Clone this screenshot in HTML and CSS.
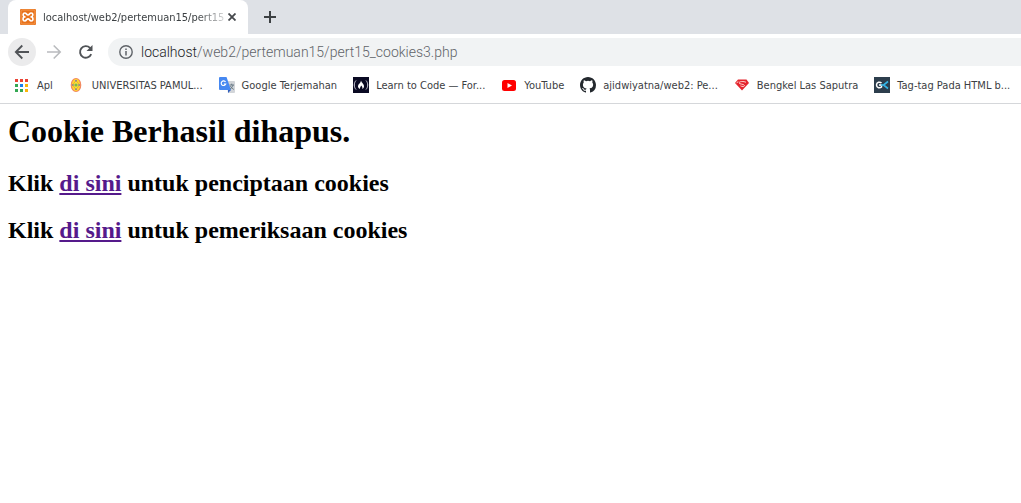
FILE: index.html
```html
<!DOCTYPE html>
<html lang="id">
<head>
<meta charset="utf-8">
<title>Cookies</title>
<link rel="stylesheet" href="styles.css">
</head>
<body>
<header class="browser">
  <div class="tabs">
    <div class="tab">
      <svg class="icon tab-icon" viewBox="0 0 16 16" aria-hidden="true"><rect width="16" height="16" rx="1" fill="#e8721c"/><rect x="1" y="1" width="14" height="14" rx="1" fill="none" stroke="#f39a50"/><path d="M5.500 7.800H4.200C2.700 6.500 2.800 4 4.800 4c1.700 0 1.700 2 3.200 2s1.500-2 3.200-2c2 0 2.100 2.500.600 3.800h-1.300M4.200 7.800C2.500 9 2.600 12 4.800 12c1.700 0 1.700-2.200 3.200-2.200s1.500 2.200 3.200 2.200c2.200 0 2.300-3 .600-4.200" fill="none" stroke="#fff" stroke-width="1.700"/></svg>
      <span class="tab-title">localhost/web2/pertemuan15/pert15</span>
      <button class="tab-close" type="button" aria-label="Tutup tab"><svg viewBox="0 0 8 8"><path d="M.5.5l7 7M7.5.5l-7 7" stroke="#45484c" stroke-width="1.8"/></svg></button>
    </div>
    <button class="new-tab" type="button" aria-label="Tab baru"><svg viewBox="0 0 12 12"><path d="M6 0v12M0 6h12" stroke="#3c4043" stroke-width="2"/></svg></button>
  </div>
  <div class="toolbar">
    <button class="nav nav-active" type="button" aria-label="Kembali"><svg viewBox="0 0 16 16"><path d="M15 8H2M8.3 1.5L1.8 8l6.5 6.5" fill="none" stroke="#505357" stroke-width="1.800"/></svg></button>
    <button class="nav" type="button" aria-label="Maju"><svg viewBox="0 0 16 16"><path d="M1 8h13M7.7 1.5L14.2 8l-6.5 6.5" fill="none" stroke="#b9bbbe" stroke-width="1.6"/></svg></button>
    <button class="nav" type="button" aria-label="Muat ulang"><svg viewBox="0 0 16 16"><path d="M13.2 10.2A5.8 5.8 0 1 1 12 3.9l1 1" fill="none" stroke="#505357" stroke-width="1.900"/><path d="M14.500 1v6h-6z" fill="#505357"/></svg></button>
    <div class="address">
      <svg class="info" viewBox="0 0 14 14" aria-hidden="true"><circle cx="7" cy="7" r="6.2" fill="none" stroke="#5f6368" stroke-width="1.4"/><path d="M7 6v4.5M7 3.4v1.5" stroke="#5f6368" stroke-width="1.5"/></svg>
      <span class="url"><span class="host">localhost</span>/web2/pertemuan15/pert15_cookies3.php</span>
    </div>
  </div>
  <nav class="bookmarks">
    <a class="bookmark" href="#"><svg class="icon" viewBox="0 0 16 16"><path d="M1 2h3v3H1zM6 2h3v3H6zM11 2h3v3h-3z" fill="#ea4335"/><path d="M1 7h3v3H1zM1 12h3v3H1zM6 12h3v3H6z" fill="#34a853"/><path d="M6 7h3v3H6z" fill="#1a80f0"/><path d="M11 7h3v3h-3zM11 12h3v3h-3z" fill="#fbb40a"/></svg>Apl</a>
    <a class="bookmark" href="#"><svg class="icon" viewBox="0 0 16 16"><ellipse cx="7" cy="8" rx="4.7" ry="6.5" fill="#ffde28" stroke="#f28a62" stroke-width="1.2"/><path d="M7 3.5L10.5 8 7 12.5 3.5 8z" fill="#f6e040" stroke="#e8a030" stroke-width=".8"/><circle cx="7" cy="8" r="1.6" fill="#7cb84c"/><path d="M6.300 3h1.400v1.400H6.300zM6.300 11.600h1.400V13H6.300zM3.200 7.300h1.400v1.400H3.200zM9.400 7.300h1.400v1.400H9.400z" fill="#6b70b5"/></svg>UNIVERSITAS PAMUL...</a>
    <a class="bookmark" href="#"><svg class="icon" viewBox="0 0 16 16"><path d="M7 4h8a1 1 0 0 1 1 1v10a1 1 0 0 1-1 1H9z" fill="#d2d5d9"/><path d="M1 0h6.5L12 13H1a1 1 0 0 1-1-1V1a1 1 0 0 1 1-1z" fill="#4688f1"/><path d="M9 13h3l-3 3z" fill="#315fbd"/><path d="M6.500 5A2.3 2.3 0 1 0 6.700 7H4.800" fill="none" stroke="#fff" stroke-width="1.2"/><path d="M10.5 8H15M12.7 6.7V8M14 8c-.3 2-1.6 3.4-3 4M11.5 9c.6 1.5 2 2.7 3.3 3.4" fill="none" stroke="#697b87"/></svg>Google Terjemahan</a>
    <a class="bookmark" href="#"><svg class="icon" viewBox="0 0 16 16"><path d="M0 0h16v16H0z" fill="#0a0a23"/><path d="M3 3.5C.7 6 .7 10 3 12.500M13 3.500c2.300 2.500 2.300 6.500 0 9" fill="none" stroke="#d0d0dc"/><path d="M8 3.500c.5 2.500 3.300 3.500 3 6-.1 1-.7 1.900-1.700 2.500.4-1.500 0-2.500-1.200-3.500C7.600 10 6.800 10.500 7 12c-1.800-.8-2.500-2.400-1.700-4C6 6.500 7.800 6 8 3.500z" fill="#fff"/></svg>Learn to Code — For...</a>
    <a class="bookmark" href="#"><svg class="icon" viewBox="0 0 16 16"><rect x="1" y="3" width="14" height="11" rx="2.500" fill="#f00"/><path d="M6.500 6l4.500 2.500L6.500 11z" fill="#fff"/></svg>YouTube</a>
    <a class="bookmark" href="#"><svg class="icon" viewBox="0 0 16 16"><path fill="#24292e" d="M8 0C3.580 0 0 3.580 0 8c0 3.540 2.290 6.530 5.470 7.590.4.070.55-.17.55-.38 0-.19-.01-.82-.01-1.490-2.010.37-2.530-.49-2.690-.94-.09-.23-.48-.94-.82-1.130-.28-.15-.68-.52-.01-.53.63-.01 1.080.58 1.230.82.72 1.210 1.870.87 2.330.66.07-.52.28-.87.51-1.070-1.780-.2-3.640-.89-3.640-3.950 0-.87.31-1.590.82-2.150-.08-.2-.36-1.020.08-2.120 0 0 .67-.21 2.200.82a7.600 7.600 0 0 1 4 0c1.530-1.040 2.200-.82 2.200-.82.44 1.100.16 1.920.08 2.120.51.56.82 1.270.82 2.150 0 3.070-1.870 3.750-3.650 3.950.29.25.54.73.54 1.480 0 1.070-.01 1.930-.01 2.200 0 .21.15.46.55.38A8 8 0 0 0 16 8c0-4.420-3.580-8-8-8z"/></svg>ajidwiyatna/web2: Pe...</a>
    <a class="bookmark" href="#"><svg class="icon" viewBox="0 0 16 16"><path d="M4 2.500h8.500L15 6l-7 7.500L1 6z" fill="#e4252d"/><path d="M12 5.300C10 4.200 5 4.200 5 5.900c0 1.500 5.500 1 5.500 2.600 0 1.200-2.500 1.200-4 .4M2.700 6.200l1.300-1.800" fill="none" stroke="#ffd2cf"/></svg>Bengkel Las Saputra</a>
    <a class="bookmark" href="#"><svg class="icon" viewBox="0 0 16 16"><path d="M0 0h16v16H0z" fill="#2d3e4d"/><path d="M7.500 6C6 4.500 2.500 5 2.500 8s3.500 3.500 5 2V8H5" fill="none" stroke="#fff" stroke-width="1.500"/><path d="M14 4.500L9.500 8l4.500 3.500M7 8h3" fill="none" stroke="#35b5e8" stroke-width="1.600"/></svg>Tag-tag Pada HTML b...</a>
  </nav>
</header>
<main class="page">
  <h1 class="heading">Cookie Berhasil dihapus.</h1>
  <h2 class="line">Klik <a class="link" href="#">di sini</a> untuk penciptaan cookies</h2>
  <h2 class="line">Klik <a class="link" href="#">di sini</a> untuk pemeriksaan cookies</h2>
</main>
</body>
</html>
```
FILE: styles.css
```css
* { box-sizing: border-box; }
body {
  margin: 0;
  background: #fff;
  color: #000;
  font-family: "Liberation Serif", "Times New Roman", serif;
}
.browser {
  font-family: "DejaVu Sans Condensed", "Noto Sans", sans-serif;
  font-size: 11px;
  color: #3c4043;
  border-bottom: 1px solid #d5d7da;
}
button {
  border: 0;
  padding: 0;
  background: none;
  display: flex;
  align-items: center;
  justify-content: center;
}
.icon { width: 16px; height: 16px; flex: none; display: block; }
.tabs {
  display: flex;
  height: 34px;
  padding-left: 8px;
  background: #dee1e6;
}
.tab {
  display: flex;
  align-items: center;
  width: 240px;
  padding: 0 12px;
  gap: 4px;
  background: #fff;
  border-radius: 8px 8px 0 0;
}
.tab-icon { margin-right: 3px; }
.tab-title {
  white-space: nowrap;
  mask-image: linear-gradient(to right, #000 85%, rgba(0, 0, 0, 0.2));
}
.tab-close { width: 8px; height: 16px; }
.tab-close svg { width: 8px; height: 8px; }
.new-tab { width: 44px; }
.new-tab svg { width: 12px; height: 12px; }
.toolbar {
  display: flex;
  align-items: center;
  gap: 4px;
  height: 36px;
  padding-left: 8px;
}
.nav { width: 28px; height: 28px; border-radius: 50%; flex: none; }
.nav-active { background: #ebebec; }
.nav svg { width: 16px; height: 16px; }
.address {
  flex: 1;
  display: flex;
  align-items: center;
  gap: 8px;
  height: 28px;
  margin-left: 4px;
  padding-left: 11px;
  background: #f1f3f4;
  border-radius: 14px 0 0 14px;
}
.info { width: 14px; height: 14px; flex: none; }
.url {
  font-family: Roboto, "Noto Sans", sans-serif;
  font-size: 14px;
  font-weight: 300;
  color: #5f6368;
}
.host { color: #202124; }
.bookmarks {
  display: flex;
  gap: 16px;
  height: 33px;
  padding: 0 0 3px 14px;
  overflow: hidden;
}
.bookmark {
  display: flex;
  align-items: center;
  gap: 7px;
  flex: none;
  color: inherit;
  text-decoration: none;
  white-space: nowrap;
}
.page { padding: 8px; }
.heading { margin: 0 0 20px; font-size: 32px; line-height: 38px; }
.line { margin: 0 0 20px; font-size: 24px; line-height: 27px; }
.link { color: #551a8b; }
```
